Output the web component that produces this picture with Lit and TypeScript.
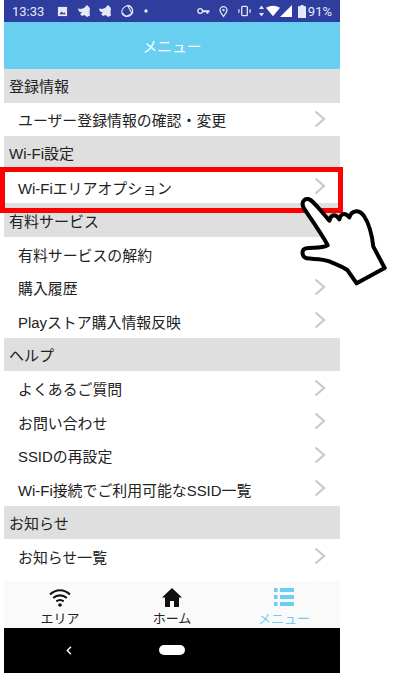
import { LitElement, html, css, svg } from "lit";
import { customElement } from "lit/decorators.js";

const sections: { title: string; items: string[] }[] = [
  { title: "登録情報", items: ["ユーザー登録情報の確認・変更"] },
  { title: "Wi-Fi設定", items: ["Wi-Fiエリアオプション"] },
  { title: "有料サービス", items: ["有料サービスの解約", "購入履歴", "Playストア購入情報反映"] },
  { title: "ヘルプ", items: ["よくあるご質問", "お問い合わせ", "SSIDの再設定", "Wi-Fi接続でご利用可能なSSID一覧"] },
  { title: "お知らせ", items: ["お知らせ一覧", ""] },
];

const chevron = html`<svg class="chev" viewBox="0 0 12 18" width="12" height="18"><path d="M1.500 1.500 L10 9 L1.500 16.500" fill="none" stroke="#c9c9c9" stroke-width="2.200"/></svg>`;

@customElement("app-root")
export class AppRoot extends LitElement {
  static styles = css`
    :host { display: block; width: 409px; height: 673px; background: #fff; position: relative; overflow: hidden;
      font-family: "Liberation Sans", "Noto Sans CJK JP", sans-serif; color: #222; }
    .phone { margin-left: 4px; width: 336px; height: 673px; display: flex; flex-direction: column; }
    .status { height: 22px; flex: none; background: #2f3d9f; color: #e6e8f5; display: flex; align-items: center;
      font-family: Roboto, sans-serif; font-size: 13px; padding: 0 8px 0 8px; box-sizing: border-box; }
    .status svg { flex: none; display: block; }
    .left { display: flex; align-items: center; gap: 8px; }
    .time { margin-right: 5px; }
    .ml2 { margin-left: 2px; }
    .dot { margin-left: 2px; }
    .right { margin-left: auto; display: flex; align-items: center; }
    .m9 { margin-left: 9px; }
    .m10 { margin-left: 10px; }
    .m8 { margin-left: 8px; }
    .m2 { margin-left: 2px; }
    .m6 { margin-left: 6px; }
    .header { height: 47px; flex: none; background: #69cff0; color: #fff; font-size: 14.800px; display: flex;
      align-items: center; justify-content: center; }
    .list { height: 512px; flex: none; overflow: hidden; background: #fff; }
    .sec { height: 33.600px; background: #dfdfdf; display: flex; align-items: center; padding: 2px 0 0 5px; box-sizing: border-box;
      font-size: 15px; line-height: 1; }
    .row { height: 33.600px; display: flex; align-items: center; padding: 5px 14px 0 14px; box-sizing: border-box; font-size: 14.900px; line-height: 1; }
    .row span { flex: 1; }
    .chev { flex: none; margin-top: -6px; }
    .nav { height: 47px; flex: none; background: #fafafa; display: grid; grid-template-columns: 112px 112px 112px; }
    .tab { display: flex; flex-direction: column; align-items: center; font-size: 13px; line-height: 16px; padding-top: 4px; color: #222; }
    .tab svg { display: block; height: 24px; margin-bottom: 2px; }
    .tab.on { color: #69cff0; }
    .sys { flex: 1; background: #000; display: flex; align-items: center; padding-left: 62px; gap: 87px; padding-bottom: 1px; }
    .pill { width: 26px; height: 10px; border-radius: 5px; background: #fff; }
    .redbox { position: absolute; left: 0; top: 167px; width: 343px; height: 46px; box-sizing: border-box; border: 5px solid #f00; }
    .hand { position: absolute; left: 290px; top: 190px; }
  `;

  render() {
    const bird = "M0 3.500l3 .5 3-1 3-3 2 2 1 1.500-.5 3.500.5 3.500-3 1.500-2.500-2-2.500 1-2-2 2-1.500-3-1z";
    return html`
      <div class="phone">
        <div class="status">
          <div class="left">
            <span class="time">13:33</span>
            <svg width="11" height="11" viewBox="0 0 12 12"><path d="M1 1h10v10H1z" fill="#e6e8f5"/><path d="M2.500 9l2.500-3 1.800 2 1.200-1.200L9.500 9z" fill="#2f3d9f"/></svg>
            <svg class="ml2" width="13" height="13" viewBox="0 0 13 13"><path d=${bird} fill="#e6e8f5"/></svg>
            <svg width="13" height="13" viewBox="0 0 13 13"><path d=${bird} fill="#e6e8f5"/></svg>
            <svg width="14" height="14" viewBox="0 0 14 14"><path d="M8 1.500A5.500 5.500 0 1 1 2 9" fill="none" stroke="#e6e8f5" stroke-width="1.300"/><path d="M2 9C1 6 4 2.500 7.500 1.500L12 9.500 6 12.500z" fill="none" stroke="#e6e8f5" stroke-width="1.100"/></svg>
            <svg class="dot" width="4" height="4" viewBox="0 0 4 4"><circle cx="2" cy="2" r="1.700" fill="#e6e8f5"/></svg>
          </div>
          <div class="right">
            <svg width="13" height="9" viewBox="0 0 13 9"><circle cx="3.200" cy="4" r="2.400" fill="none" stroke="#e6e8f5" stroke-width="1.300"/><path d="M5.500 3.200h7v2h-1.200v1.600H9.500V5.200h-4z" fill="#e6e8f5"/></svg>
            <svg class="m9" width="9" height="13" viewBox="0 0 11 14"><path d="M5.500 13C3 9.800 1.200 7.800 1.200 5.300a4.300 4.300 0 0 1 8.600 0C9.800 7.800 8 9.800 5.500 13z" fill="none" stroke="#e6e8f5" stroke-width="1.500"/><circle cx="5.500" cy="5.300" r="1.500" fill="#e6e8f5"/></svg>
            <svg class="m10" width="13" height="12" viewBox="0 0 14 12"><rect x="4" y="1" width="6" height="10" rx="1" fill="none" stroke="#e6e8f5" stroke-width="1.400"/><path d="M1 4v4M13 4v4" stroke="#e6e8f5" stroke-width="1.400"/></svg>
            <svg class="m8" width="5" height="12" viewBox="0 0 5 12"><path d="M2.500 .5L5 4H0zM2.500 11.500L0 8h5z" fill="#e6e8f5"/></svg>
            <svg class="m2" width="14" height="12" viewBox="0 0 15 12"><path d="M0 2.500Q7.500 -1.500 15 2.500L7.500 11.500z" fill="#fff"/></svg>
            <svg width="12" height="12" viewBox="0 0 12 12"><path d="M0 12L12 0v12z" fill="#fff"/></svg>
            <svg class="m6" width="8" height="13" viewBox="0 0 8 13"><path d="M2.500 0h3v1.300H8V13H0V1.300h2.500z" fill="#e6e8f5"/></svg>
            <span class="m2">91%</span>
          </div>
        </div>
        <div class="header">メニュー</div>
        <div class="list">
          ${sections.map(
            (s) => html`
              <div class="sec">${s.title}</div>
              ${s.items.map((i) => html`<div class="row"><span>${i}</span>${chevron}</div>`)}
            `
          )}
        </div>
        <div class="nav">
          <div class="tab">
            <svg width="24" height="24" viewBox="0 0 24 24"><path d="M2 9.500C8 3.800 16 3.800 22 9.500M5.200 13C9.200 9.500 14.800 9.500 18.800 13M8.300 16.300C10.500 14.700 13.500 14.700 15.700 16.300" fill="none" stroke="#111" stroke-width="2.100"/><circle cx="12" cy="20" r="1.800" fill="#111"/></svg>
            エリア
          </div>
          <div class="tab">
            <svg width="24" height="24" viewBox="0 0 24 24"><path d="M12 3L2 12.500h3V22h5v-6h4v6h5v-9.500h3z" fill="#111"/></svg>
            ホーム
          </div>
          <div class="tab on">
            <svg width="24" height="24" viewBox="0 0 24 24"><path d="M2 3h3.500v4H2zM8 3h14v4H8zM2 10h3.500v4H2zM8 10h14v4H8zM2 17h3.500v4H2zM8 17h14v4H8z" fill="#69cff0"/></svg>
            メニュー
          </div>
        </div>
        <div class="sys">
          <svg width="6" height="9" viewBox="0 0 6 9"><path d="M5 .8L1.300 4.500 5 8.200" fill="none" stroke="#fff" stroke-width="1.400"/></svg>
          <div class="pill"></div>
        </div>
      </div>
      <div class="redbox"></div>
      <svg class="hand" width="100" height="100" viewBox="0 0 300 300">
        ${svg`<path d="M55 27C68 30 80 48 118 92C122 76 134 68 148 88C152 70 165 66 178 82C184 62 205 56 222 78C238 102 246 135 250 170L284 234L200 280L172 240C150 225 135 222 118 214C95 205 70 208 50 205C35 200 33 180 47 175C70 170 90 178 113 166C100 140 75 105 42 55C32 38 42 25 55 27Z" fill="#fff" stroke="#000" stroke-width="12" stroke-linejoin="round"/>`}
      </svg>
    `;
  }
}
